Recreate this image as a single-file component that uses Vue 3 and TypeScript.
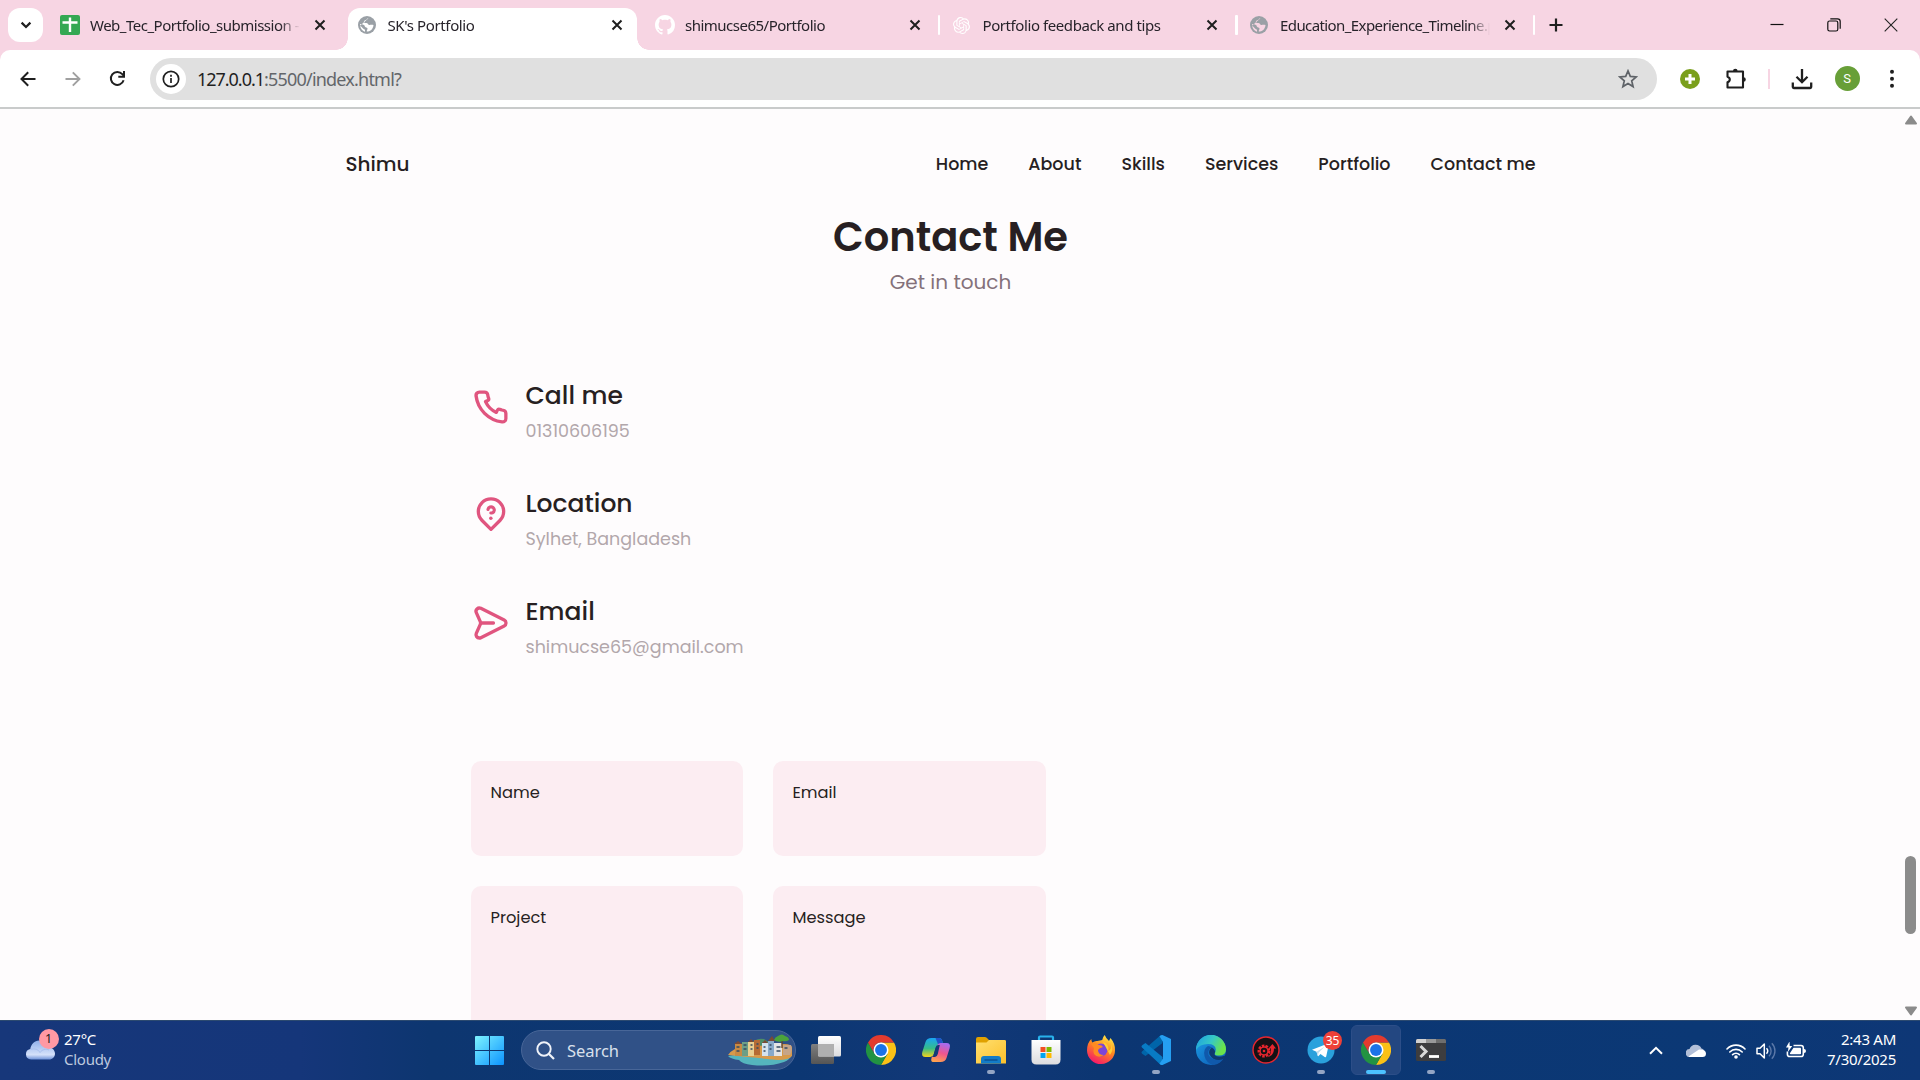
<script setup lang="ts">
import { ref } from 'vue'

interface Tab { title: string; icon: string; active?: boolean; divider?: boolean; width: number }
interface Info { icon: string; title: string; value: string }

const tabs = ref<Tab[]>([
  { title: 'Web_Tec_Portfolio_submission -', icon: 'sheets', width: 209 },
  { title: "SK's Portfolio", icon: 'globe', active: true, width: 87 },
  { title: 'shimucse65/Portfolio', icon: 'github', divider: true, width: 140 },
  { title: 'Portfolio feedback and tips', icon: 'gpt', divider: true, width: 178 },
  { title: 'Education_Experience_Timeline.p', icon: 'globe', divider: true, width: 216 },
])

const nav = ['Home', 'About', 'Skills', 'Services', 'Portfolio', 'Contact me']

const infos: Info[] = [
  { icon: 'phone', title: 'Call me', value: '01310606195' },
  { icon: 'pin', title: 'Location', value: 'Sylhet, Bangladesh' },
  { icon: 'send', title: 'Email', value: 'shimucse65@gmail.com' },
]

const fields = [
  { label: 'Name' }, { label: 'Email' },
  { label: 'Project', tall: true }, { label: 'Message', tall: true },
]

const apps = [
  { name: 'taskview' }, { name: 'chrome' }, { name: 'copilot' },
  { name: 'explorer', open: true }, { name: 'store' }, { name: 'firefox' },
  { name: 'code', open: true }, { name: 'edge' }, { name: 'red' },
  { name: 'telegram', open: true, badge: '35' },
  { name: 'chrome', current: true }, { name: 'terminal', open: true },
]

// Spreads a label over a given width by adjusting its letter spacing.
const vFit = {
  mounted(el: HTMLElement, binding: { value: number }) {
    const n = (el.textContent || '').length
    const w = el.getBoundingClientRect().width
    if (n > 0 && w > 0) el.style.letterSpacing = `${(binding.value - w) / n}px`
  },
}
</script>

<template>
  <div class="screen">
    <svg class="defs" width="0" height="0" aria-hidden="true">
      <defs>
        <linearGradient id="gWin" x1="0" y1="0" x2="1" y2="1"><stop offset="0" stop-color="#7df3ff" /><stop offset="1" stop-color="#0c93ff" /></linearGradient>
        <linearGradient id="gFolder" x1="0" y1="0" x2="1" y2="1"><stop offset="0" stop-color="#ffdf70" /><stop offset="1" stop-color="#fcc12b" /></linearGradient>
        <linearGradient id="gCloud" x1="0" y1="0" x2="0" y2="1"><stop offset="0" stop-color="#8fb0ea" /><stop offset=".75" stop-color="#d5e1fa" /><stop offset="1" stop-color="#6e92d8" /></linearGradient>
        <linearGradient id="gFox" x1=".8" y1="0" x2=".3" y2="1"><stop offset="0" stop-color="#fff04a" /><stop offset=".45" stop-color="#ff8a1e" /><stop offset="1" stop-color="#f5156c" /></linearGradient>
        <linearGradient id="gEdge" x1="0" y1="0" x2="1" y2=".4"><stop offset="0" stop-color="#1c9ee4" /><stop offset=".55" stop-color="#36c8c5" /><stop offset="1" stop-color="#6be34a" /></linearGradient>
        <linearGradient id="gEdge2" x1="0" y1="0" x2="1" y2="1"><stop offset="0" stop-color="#1ba0e8" /><stop offset="1" stop-color="#0c55b0" /></linearGradient>
        <linearGradient id="gCopA" x1="0" y1="0" x2="0" y2="1"><stop offset="0" stop-color="#19a5f5" /><stop offset=".55" stop-color="#36bd88" /><stop offset="1" stop-color="#f5d51a" /></linearGradient>
        <linearGradient id="gCopB" x1=".6" y1="0" x2=".3" y2="1"><stop offset="0" stop-color="#a66cf0" /><stop offset=".5" stop-color="#f0558e" /><stop offset="1" stop-color="#ffa34d" /></linearGradient>
        <linearGradient id="gPaper" x1="0" y1="0" x2="0" y2="1"><stop offset="0" stop-color="#ffffff" /><stop offset="1" stop-color="#dcdcde" /></linearGradient>
        <linearGradient id="gGrey" x1="0" y1="0" x2="0" y2="1"><stop offset="0" stop-color="#7f7f7f" /><stop offset="1" stop-color="#555555" /></linearGradient>
      </defs>
    </svg>

    <header class="tabstrip">
      <button class="tab-search"><svg width="12" height="12" viewBox="0 0 12 12"><path d="M1.600 3.600 6 8l4.400-4.400" fill="none" stroke="#1f1f1f" stroke-width="2.200" /></svg></button>
      <div class="tabs">
        <div v-for="(t, i) in tabs" :key="i" class="tab" :class="{ active: t.active }">
          <span class="fav">
            <svg v-if="t.icon === 'sheets'" width="20" height="20" viewBox="0 0 20 20"><rect width="20" height="20" rx="2" fill="#34a853" /><path d="M10 2.500v14.500M2.500 7.500h15" stroke="#fff" stroke-width="2.400" /></svg>
            <svg v-else-if="t.icon === 'globe'" width="18" height="18" viewBox="0 0 18 18"><circle cx="9" cy="9" r="9" fill="#9aa0a6" /><path d="M10.500 2.200c-1.800 0-1.500 1.500-2.700 1.900-1.100.4-2 .9-1.900 2 .1 1 1.400.9 2.500.9 1.500 0 1.400 1.700 2.700 1.900 1.300.1 2.600-.5 4.400.1-.1 1.900-1 4-2.600 5.200-1 .7-2.400 1.300-4.100 1.400-.2-1.300.8-1.900.7-3-.1-.9-1-1-1.900-1.300-1-.4-.7-1.500-1.600-2.200C4.700 8.300 3.500 8 2.100 7.900 1.900 11.500 3.700 14.600 7 15.700v-2C5 13.200 4.200 11 2 9.800Z" :fill="t.active ? '#ffffff' : '#f7d5e3'" /></svg>
            <svg v-else-if="t.icon === 'github'" width="20" height="20" viewBox="0 0 16 16"><path fill="#fff" d="M8 0C3.580 0 0 3.580 0 8c0 3.540 2.290 6.530 5.470 7.590.4.070.55-.17.55-.38 0-.19-.01-.82-.01-1.490-2.010.37-2.530-.49-2.690-.94-.09-.23-.48-.94-.82-1.130-.28-.15-.68-.52-.01-.53.63-.01 1.080.58 1.230.82.72 1.210 1.870.87 2.330.66.070-.52.28-.87.51-1.070-1.780-.2-3.640-.89-3.640-3.950 0-.87.31-1.590.82-2.150-.08-.2-.36-1.020.08-2.120 0 0 .67-.21 2.200.82.64-.18 1.320-.27 2-.27s1.360.09 2 .27c1.530-1.040 2.200-.82 2.200-.82.44 1.100.16 1.920.08 2.120.51.56.82 1.270.82 2.150 0 3.070-1.870 3.750-3.650 3.950.29.25.54.73.54 1.480 0 1.070-.01 1.930-.01 2.200 0 .21.15.46.55.38A8.010 8.010 0 0 0 16 8c0-4.420-3.580-8-8-8Z" /></svg>
            <svg v-else width="17" height="17" viewBox="0 0 24 24"><path fill="#fff" d="M22.282 9.821a5.985 5.985 0 0 0-.516-4.911 6.046 6.046 0 0 0-6.510-2.900A6.065 6.065 0 0 0 4.981 4.182a5.985 5.985 0 0 0-3.998 2.900 6.046 6.046 0 0 0 .743 7.097 5.980 5.980 0 0 0 .511 4.911 6.051 6.051 0 0 0 6.515 2.900A5.985 5.985 0 0 0 13.260 24a6.056 6.056 0 0 0 5.772-4.206 5.990 5.990 0 0 0 3.998-2.900 6.056 6.056 0 0 0-.747-7.073zM13.260 22.430a4.476 4.476 0 0 1-2.876-1.041l.141-.081 4.779-2.758a.795.795 0 0 0 .393-.681v-6.737l2.020 1.169a.071.071 0 0 1 .038.052v5.583a4.504 4.504 0 0 1-4.495 4.494zM3.600 18.304a4.471 4.471 0 0 1-.535-3.014l.142.085 4.783 2.759a.771.771 0 0 0 .781 0l5.843-3.369v2.332a.080.080 0 0 1-.033.062L9.740 19.950a4.500 4.500 0 0 1-6.140-1.646zM2.341 7.896a4.485 4.485 0 0 1 2.366-1.973V11.600a.766.766 0 0 0 .388.677l5.815 3.355-2.021 1.168a.076.076 0 0 1-.071 0l-4.830-2.787A4.504 4.504 0 0 1 2.341 7.872zm16.597 3.855l-5.833-3.387L15.119 7.200a.076.076 0 0 1 .071 0l4.830 2.791a4.494 4.494 0 0 1-.677 8.105v-5.678a.790.790 0 0 0-.405-.667zm2.011-3.023l-.142-.085-4.774-2.782a.776.776 0 0 0-.785 0L9.409 9.230V6.897a.066.066 0 0 1 .028-.061l4.830-2.787a4.499 4.499 0 0 1 6.682 4.660zM8.307 12.863l-2.020-1.164a.080.080 0 0 1-.038-.057V6.074a4.499 4.499 0 0 1 7.376-3.453l-.142.081L8.704 5.460a.795.795 0 0 0-.393.681zm1.097-2.366l2.602-1.500 2.607 1.500v2.999l-2.597 1.500-2.607-1.500Z" /></svg>
          </span>
          <span class="tab-title"><span v-fit="t.width" class="fit">{{ t.title }}</span></span>
          <svg class="tab-x" width="12" height="12" viewBox="0 0 12 12"><path d="M1.500 1.500l9 9m0-9l-9 9" stroke="#1f1f1f" stroke-width="2" /></svg>
          <i v-if="t.divider" class="divider"></i>
        </div>
      </div>
      <svg class="new-tab" width="14" height="14" viewBox="0 0 14 14"><path d="M7 .5v13M.5 7h13" stroke="#1f1f1f" stroke-width="2.200" /></svg>
      <div class="win-ctl">
        <svg width="14" height="14" viewBox="0 0 14 14"><path d="M.5 6.500h13" stroke="#111" stroke-width="1.200" /></svg>
        <svg width="14" height="14" viewBox="0 0 14 14"><g fill="none" stroke="#111" stroke-width="1.200"><rect x=".8" y="3" width="10" height="10" rx="1.800" /><path d="M3.300 .8h7.200a2.700 2.700 0 0 1 2.700 2.700v7.200" /></g></svg>
        <svg width="14" height="14" viewBox="0 0 14 14"><path d="M.7.7l12.600 12.600m0-12.600L.7 13.300" stroke="#222" stroke-width="1.100" /></svg>
      </div>
    </header>

    <div class="toolbar-wrap">
      <div class="toolbar">
        <svg class="tb back" width="16" height="16" viewBox="0 0 16 16"><path d="M15.500 8H1.700M8.200 1.300 1.500 8l6.700 6.700" fill="none" stroke="#1f1f1f" stroke-width="2" /></svg>
        <svg class="tb fwd" width="16" height="16" viewBox="0 0 16 16"><path d="M.5 8h13.800M7.800 1.300 14.500 8l-6.700 6.700" fill="none" stroke="#a0a0a0" stroke-width="1.900" /></svg>
        <svg class="tb reload" width="17" height="17" viewBox="0 0 17 17"><path d="M14.600 10.300A6.500 6.500 0 1 1 13.300 4.200L15 6" fill="none" stroke="#1f1f1f" stroke-width="2" /><path d="M15 1v5.800H9.300" fill="none" stroke="#1f1f1f" stroke-width="2" /></svg>
        <div class="omnibox">
          <span class="site-info"><svg width="18" height="18" viewBox="0 0 18 18"><circle cx="9" cy="9" r="7.700" fill="none" stroke="#1f1f1f" stroke-width="1.700" /><path d="M9 8v5M9 4.800v1.900" stroke="#1f1f1f" stroke-width="1.700" /></svg></span>
          <span class="url"><span v-fit="67" class="fit host">127.0.0.1</span><span v-fit="137" class="fit">:5500/index.html?</span></span>
          <svg class="star" width="20" height="20" viewBox="0 0 20 20"><path d="M10 1.900l2.300 5.500 5.900.5-4.500 3.900 1.400 5.800L10 14.500l-5.100 3.100 1.400-5.800L1.800 7.900l5.900-.5Z" fill="none" stroke="#5f6368" stroke-width="1.700" /></svg>
        </div>
        <div class="actions">
          <svg width="20" height="20" viewBox="0 0 20 20"><circle cx="10" cy="10" r="10" fill="#7a9f1c" /><path d="M10 5v10M5 10h10" stroke="#fff" stroke-width="3" /></svg>
          <svg width="22" height="22" viewBox="0 0 22 22"><path d="M2.500 3.500h15.500v16h-15.500v-5.200q2.300-.8 2.300-2.800t-2.300-2.800Z" fill="none" stroke="#1f1f1f" stroke-width="2.100" stroke-linejoin="round" /><path d="M8 3a2.300 2.300 0 0 1 4.600 0ZM18.500 9.200a2.300 2.300 0 0 1 0 4.600Z" fill="#1f1f1f" /></svg>
          <i class="pink-line"></i>
          <svg width="22" height="22" viewBox="0 0 22 22"><path d="M11 1v13M5.500 8.700 11 14.200l5.500-5.500M1.800 14.500v4.500q0 1 1 1h16.400q1 0 1-1v-4.500" fill="none" stroke="#1f1f1f" stroke-width="2.300" /></svg>
          <span class="avatar">S</span>
          <svg width="6" height="20" viewBox="0 0 6 20"><g fill="#1f1f1f"><circle cx="3" cy="2.800" r="2" /><circle cx="3" cy="9.800" r="2" /><circle cx="3" cy="16.800" r="2" /></g></svg>
        </div>
      </div>
    </div>

    <main class="viewport">
      <div class="page">
        <nav class="site-nav">
          <span class="brand">Shimu</span>
          <div class="links"><a v-for="n in nav" :key="n">{{ n }}</a></div>
        </nav>
        <div class="heading">
          <h1>Contact Me</h1>
          <p>Get in touch</p>
        </div>
        <div class="infos">
          <div v-for="c in infos" :key="c.icon" class="info">
            <svg width="40" height="40" viewBox="0 0 24 24" fill="#e0557f">
              <path v-if="c.icon === 'phone'" d="M19.440,13c-.22,0-.45-.07-.67-.12a9.440,9.440,0,0,1-1.310-.39,2,2,0,0,0-2.480,1l-.22.45a12.180,12.180,0,0,1-2.660-2,12.180,12.180,0,0,1-2-2.660L10.520,9a2,2,0,0,0,1-2.480,10.330,10.330,0,0,1-.39-1.310c-.05-.22-.09-.45-.12-.68a3,3,0,0,0-3-2.490h-3a3,3,0,0,0-3,3.410A19,19,0,0,0,18.530,21.910l.38,0a3,3,0,0,0,2-.76,3,3,0,0,0,1-2.250v-3A3,3,0,0,0,19.440,13Zm.5,6a1,1,0,0,1-.34.75,1.050,1.050,0,0,1-.82.25A17,17,0,0,1,4.070,5.220a1.090,1.090,0,0,1,.25-.82,1,1,0,0,1,.75-.34h3a1,1,0,0,1,1,.79q.06.41.15.81a11.120,11.120,0,0,0,.46,1.550l-1.400.65a1,1,0,0,0-.49,1.330,14.490,14.490,0,0,0,7,7,1,1,0,0,0,.76,0,1,1,0,0,0,.57-.52l.62-1.400a13.690,13.690,0,0,0,1.580.46q.4.09.81.15a1,1,0,0,1,.79,1Z" />
              <g v-else-if="c.icon === 'pin'"><path d="M12 20.600 6.650 15.300a7.600 7.600 0 1 1 10.700 0Z" fill="none" stroke="#e0557f" stroke-width="2" stroke-linejoin="round" /><path d="M10.200 8.600a1.900 1.900 0 1 1 2.700 2.100 3 3 0 0 1-1 .1" fill="none" stroke="#e0557f" stroke-width="1.900" stroke-linecap="round" /><circle cx="11.900" cy="14" r="1.050" /></g>
              <path v-else d="M20.340,9.320l-14-7a3,3,0,0,0-4.080,3.900l2.400,5.370h0a1.060,1.060,0,0,1,0,.82l-2.400,5.370A3,3,0,0,0,5,22a3.140,3.140,0,0,0,1.350-.32l14-7a3,3,0,0,0,0-5.360Zm-.89,3.570-14,7a1,1,0,0,1-1.350-1.300l2.390-5.370A2,2,0,0,0,6.570,13h6.890a1,1,0,0,0,0-2H6.570a2,2,0,0,0-.08-.22L4.100,5.410a1,1,0,0,1,1.350-1.300l14,7a1,1,0,0,1,0,1.780Z" />
            </svg>
            <div class="info-text">
              <h3>{{ c.title }}</h3>
              <p>{{ c.value }}</p>
            </div>
          </div>
        </div>
        <form class="form">
          <div v-for="f in fields" :key="f.label" class="field" :class="{ tall: f.tall }"><label>{{ f.label }}</label></div>
        </form>
      </div>
      <div class="scrollbar">
        <svg width="14" height="10" viewBox="0 0 14 10"><path d="M7 1.500 12 8.500H2Z" fill="#8b8b8b" stroke="#8b8b8b" stroke-width="2" stroke-linejoin="round" /></svg>
        <div class="thumb"></div>
        <svg class="down" width="14" height="10" viewBox="0 0 14 10"><path d="M7 8.500 12 1.500H2Z" fill="#8b8b8b" stroke="#8b8b8b" stroke-width="2" stroke-linejoin="round" /></svg>
      </div>
    </main>

    <footer class="taskbar">
      <div class="weather">
        <div class="cloud">
          <svg width="31" height="22" viewBox="0 0 31 22"><path d="M6 20.500a5.300 5.300 0 0 1-.7-10.500C6 5.200 9.500 1.500 14 1.500c4 0 7 2.500 8 6.200 4.500 0 8 3 8 6.800 0 3.500-2.500 6-6 6Z" fill="url(#gCloud)" /><path d="M5.500 10.500c4-1.500 8 0 9.500 3 2-3 6-4 9-2.500" fill="none" stroke="#a9c0ef" stroke-width="1" /></svg>
          <b>1</b>
        </div>
        <div class="weather-text"><span v-fit="32" class="fit">27°C</span><span v-fit="47" class="fit dim">Cloudy</span></div>
      </div>
      <div class="dock">
        <svg class="start" width="29" height="29" viewBox="0 0 29 29"><path fill="url(#gWin)" d="M1 0h13v14H0V1a1 1 0 0 1 1-1ZM15 0h13a1 1 0 0 1 1 1v13H15ZM0 15h14v14H1a1 1 0 0 1-1-1ZM15 15h14v13a1 1 0 0 1-1 1H15Z" /></svg>
        <div class="search">
          <svg width="19" height="19" viewBox="0 0 19 19"><circle cx="8" cy="8" r="6.700" fill="none" stroke="#f0f3f9" stroke-width="1.900" /><path d="m13 13 5 5" stroke="#f0f3f9" stroke-width="2.200" /></svg>
          <span v-fit="52" class="fit">Search</span>
          <svg class="island" width="64" height="32" viewBox="0 0 64 32">
            <path d="M20 12q8-9 16-7l8 5v10H20Z" fill="#4d8d68" />
            <path d="M0 22q20-4 40-3 15 0 24 1-2 6-8 8-14 5-32 3-10-1-13-5-8-1-11-4Z" fill="#55b5bd" />
            <path d="M0 21q6-8 16-8l40-3q8 0 8 4v8q-3 4-14 4-30-3-50-5Z" fill="#d79a4b" />
            <path d="M7 10h7v12H7Z" fill="#c98a43" /><path d="M14 8h6v14h-6Z" fill="#6c9e86" /><path d="M20 8h6v14h-6Z" fill="#e8cf91" /><path d="M26 6h6v15h-6Z" fill="#b56b34" />
            <path d="M34 9h6v13h-6Z" fill="#d4e2ee" /><path d="M40 7h6v15h-6Z" fill="#87a9ca" /><path d="M46 9h8v13h-8Z" fill="#e3e4e5" /><path d="M55 11h8q2 5-1 10h-7Z" fill="#c6a588" />
            <path d="m6 10 4-3 4 3ZM20 8l3-3 3 3ZM40 7l4-5 3 5ZM34 9l3-3 3 3Z" fill="#7c4a35" />
            <path d="M8.500 13h3m-3 4h3m4-6h3m-3 4h3m4-4h2m-2 4h2m4-5h2m-2 4h2m5-1h2m-2 4h2m4-6h2m-2 4h2m5-2h4m-4 4h4m4-3h3" stroke="#344a61" stroke-width="1.300" />
            <path d="M54 5v9" stroke="#65452a" stroke-width="1.400" /><path d="M46 6q1-3 4-4 4-3 7 0 4 1 4 4-3 2-6 1-5 2-9-1Z" fill="#4ba33b" />
          </svg>
        </div>
        <div v-for="(a, i) in apps" :key="i" class="app" :class="{ current: a.current, open: a.open }">
          <svg v-if="a.name === 'taskview'" width="30" height="30" viewBox="0 0 30 30"><rect x="0" y="9" width="23" height="20" rx="1.500" fill="url(#gGrey)" /><rect x="7" y="1" width="23" height="20.500" rx="1.500" fill="url(#gPaper)" /><path d="M7 9h16v12.500H8.500A1.500 1.500 0 0 1 7 20Z" fill="#b0b0b0" /></svg>
          <svg v-else-if="a.name === 'chrome'" width="30" height="30" viewBox="0 0 48 48"><path d="M24 12H44.800A24 24 0 0 1 24 48L34.400 30Z" fill="#fbc116" /><path d="M34.400 30 24 48A24 24 0 0 1 3.200 12L13.600 30Z" fill="#229342" /><path d="M3.200 12A24 24 0 0 1 44.800 12H24A12 12 0 0 0 13.600 30Z" fill="#e33b2e" /><path d="M24 12 34.400 30 13.600 30Z" fill="#fff" /><circle cx="24" cy="24" r="12" fill="#fff" /><circle cx="24" cy="24" r="9.500" fill="#1a73e8" /></svg>
          <svg v-else-if="a.name === 'copilot'" width="30" height="30" viewBox="0 0 30 30"><path d="M10.500 3H18q2.500 0 3.300 3l1 4h-4.500q-2.500 0-3.300 3l-1.700 6q-1 3-4 3H4.500Q0 22 1.300 17L4.500 7q1.200-4 6-4Z" fill="url(#gCopA)" /><path d="M14.500 3H18q2.500 0 3.300 3l1 4h-5Z" fill="#2152c9" /><path d="M19.500 27H12q-2.500 0-1.500-4l.7-2q2-.5 2.800-3l2-7q1-3 4-3h5.500q4.500 0 3.200 5l-3.200 10q-1.200 4-6 4Z" fill="url(#gCopB)" /><path d="m15 12-2.500 8q-.7 2-2.500 2h4q2 0 2.800-3l2-9h-1.300q-2 0-2.500 2Z" fill="#123a78" /></svg>
          <svg v-else-if="a.name === 'explorer'" width="30" height="30" viewBox="0 0 30 30"><path d="M0 4q0-2 2-2h7q1.500 0 2.500 1.500L13 5h15.500Q30 5 30 6.500V12H0Z" fill="#e0a100" /><path d="M0 7.500h10.500L13 5h15.500Q30 5 30 6.500V28.500H0Z" fill="url(#gFolder)" /><path d="M5 28.500V24q0-3 3-3h14q3 0 3 3v4.500Z" fill="#137cc7" /><path d="M8.500 25h13" stroke="#0c4f91" stroke-width="1.400" /></svg>
          <svg v-else-if="a.name === 'store'" width="30" height="30" viewBox="0 0 30 30"><path d="M8 7V2.500Q8 1.500 9 1.500h12q1 0 1 1V7" fill="none" stroke="#28b1ec" stroke-width="2.200" /><path d="M.5 5h29v19.500q0 5-5 5h-19q-5 0-5-5Z" fill="url(#gPaper)" /><path d="M9.500 12h5v5h-5Z" fill="#f25022" /><path d="M15.500 12h5v5h-5Z" fill="#7fba00" /><path d="M9.500 18h5v5h-5Z" fill="#00a4ef" /><path d="M15.500 18h5v5h-5Z" fill="#ffb900" /></svg>
          <svg v-else-if="a.name === 'firefox'" width="30" height="30" viewBox="0 0 30 30"><path d="M18.700 0q1.300 3.300 4.300 6l1.500-3q4.700 5.500 4.500 12a14 13.800 0 1 1-28 .5Q1 8 5.300 4q.2 2.700 1 3.500Q9 5.600 11.200 6q3-.5 5-1 .5-3 2.500-5Z" fill="url(#gFox)" /><circle cx="15" cy="15" r="6.500" fill="#7b45d8" /><path d="M5 9q4-2 8 1 3 0 4 2-4 1-5 3 0 5 6 5-6 4-10-1-1-4 0-6Z" fill="#ff8a22" /><path d="M17 7q6 2 5.500 9 4-3 2.500-8 3 7-1 12" fill="#ffce35" /></svg>
          <svg v-else-if="a.name === 'code'" width="30" height="30" viewBox="0 0 30 30"><path d="M21.500 8 4.500 21 1.500 19q-2-1.300 0-3L19 .8q1.300-1.200 2.500 0Z" fill="#0065a9" /><path d="M21.500 22 4.500 8 1.500 10q-2 1.300 0 3L19 29.200q1.300 1.200 2.500 0Z" fill="#087bc4" /><path d="M21.500 0 30 4v22l-8.500 4q-1.700.3-3-1.200l3.500-5.300V7l-3.500-5.800Q20 0 21.500 0Z" fill="#259ff1" /></svg>
          <svg v-else-if="a.name === 'edge'" width="30" height="30" viewBox="0 0 30 30"><circle cx="15" cy="15" r="15" fill="url(#gEdge2)" /><path d="M0 15A15 15 0 0 1 30 14.500q0 6-7 6-4.500 0-4.500-2 1.300-1.500 1.300-4Q19.500 9 12 9 3.500 9 0 15Z" fill="url(#gEdge)" /><path d="M12 11Q7 14 8.500 21t9 9A15 15 0 0 0 28 23q-7 3.500-12 .5-5.500-3.500-3-8.500 1-2 3-2.500Q14 11 12 11Z" fill="#1059ab" /><path d="M16 12.500q-4 2.500-2.500 7 3 5.500 9.500 5.500 3-.3 5.800-1.800 1.200-2 .7-2.600-5 2-9.500.5-2-1-1.300-2.600 1.500-3-2.700-6Z" fill="#0e386f" /></svg>
          <svg v-else-if="a.name === 'red'" width="30" height="30" viewBox="0 0 30 30"><circle cx="15" cy="15" r="13" fill="#141115" stroke="#e7262e" stroke-width="1.400" /><circle cx="13" cy="16" r="5.300" fill="none" stroke="#e7262e" stroke-width="2.400" stroke-dasharray="2.500 1.200" /><circle cx="13" cy="16" r="4" fill="none" stroke="#e7262e" stroke-width="1.500" /><circle cx="13" cy="16" r="1.300" fill="#e7262e" /><path d="M15 22.500q5.500-1.500 5-9h-2.500l4-4.500 3.500 4.500h-2q0 8-8 9Z" fill="#e7262e" /></svg>
          <svg v-else-if="a.name === 'telegram'" width="30" height="30" viewBox="0 0 30 30"><circle cx="15" cy="15" r="13.500" fill="#2aa1dc" /><path d="m6 14.800 16-6.300q1-.3.800 1l-2.600 12q-.4 1.200-1.500.5L14.500 19l-2 2q-.6.500-.8-.3l-1.200-4Z" fill="#fff" /><path d="m10.500 16.700 8-5-6 6-.5 3.500Z" fill="#bddced" /></svg>
          <svg v-else width="30" height="30" viewBox="0 0 30 30"><rect y="4" width="30" height="22" rx="1.500" fill="#3d3d3f" /><path d="M0 8V5.500Q0 4 1.500 4H10v4Z" fill="#d1d1d1" /><path d="M10 4h10v4H10Z" fill="#999" /><path d="M20 4h8.500Q30 4 30 5.500V8H20Z" fill="#6e6e6e" /><path d="m4.500 11 5.500 5.500L4.500 22" fill="none" stroke="#d8d8d8" stroke-width="3" /><path d="M13 21.500h10" stroke="#fff" stroke-width="2.800" /></svg>
          <em v-if="a.badge">{{ a.badge }}</em>
        </div>
      </div>
      <div class="tray">
        <svg class="chev" width="14" height="9" viewBox="0 0 14 9"><path d="M1 7.800 7 1.800l6 6" fill="none" stroke="#fff" stroke-width="2" /></svg>
        <svg class="onedrive" width="20" height="13" viewBox="0 0 20 13"><path d="M4 13a4 4 0 0 1-.5-8A6.500 6.500 0 0 1 15.500 4.500 4.500 4.500 0 0 1 16 13Z" fill="#b2bfd8" /><path d="M2.500 12.500 13 5.500q7 0 7 4 0 3.500-3.500 3.500H4q-1 0-1.500-.5Z" fill="#fff" /></svg>
        <svg class="wifi" width="20" height="16" viewBox="0 0 20 16"><g fill="none" stroke="#fff" stroke-width="1.600" stroke-linecap="round"><path d="M1 6a12.500 12.500 0 0 1 18 0M3.800 9a8.700 8.700 0 0 1 12.400 0M6.600 11.700a4.900 4.900 0 0 1 6.800 0" /></g><circle cx="10" cy="14" r="1.800" fill="#fff" /></svg>
        <svg class="vol" width="20" height="18" viewBox="0 0 20 18"><path d="M1 6.300h3L8.300 2v14L4 11.700H1Z" fill="none" stroke="#fff" stroke-width="1.500" stroke-linejoin="round" /><path d="M10.500 6.300a4 4 0 0 1 0 5.400" fill="none" stroke="#fff" stroke-width="1.500" /><path d="M13 3.800a7.500 7.500 0 0 1 0 10.400M15.800 1.300a11 11 0 0 1 0 15.400" fill="none" stroke="#5b78a8" stroke-width="1.400" /></svg>
        <svg class="bat" width="20" height="18" viewBox="0 0 20 18"><path d="M7.500 3.500h7.500q2.300 0 2.300 2.300v6.400q0 2.300-2.300 2.300H3.700q-2.300 0-2.300-2.300V9.500" fill="none" stroke="#fff" stroke-width="1.600" /><path d="M7.500 5.800h6.700q.8 0 .8.800v4.800q0 .8-.8.800H4.700q-1 0-.8-1Z" fill="#fff" /><path d="M18 7q2 0 2 2t-2 2ZM3.500-.5 0 5.500h2.500L1.800 10 6.300 4H3.700Z" fill="#fff" /></svg>
        <div class="clock"><span v-fit="55" class="fit">2:43 AM</span><span v-fit="69" class="fit">7/30/2025</span></div>
      </div>
    </footer>
  </div>
</template>

<style>
body { margin: 0; overflow: hidden; }
</style>

<style scoped>
* { box-sizing: border-box; }
.screen { width: 1920px; height: 1080px; display: flex; flex-direction: column; overflow: hidden; background: #fefcfd; font-family: "Segoe UI", Selawik, "Noto Sans", "Open Sans", sans-serif; color: #1f1f1f; }
.defs { display: block; width: 0; height: 0; flex: none; }
svg { display: block; flex: none; }
.fit { display: inline-block; white-space: nowrap; }

.tabstrip { height: 50px; flex: none; display: flex; align-items: center; background: #f7d5e3; }
.tab-search { width: 35px; height: 34px; margin-left: 8px; padding: 0; border: 0; border-radius: 12px; background: #fff; display: flex; align-items: center; justify-content: center; flex: none; }
.tabs { display: flex; margin-left: 7px; align-self: stretch; align-items: flex-end; }
.tab { width: 297.500px; height: 42px; padding-left: 10px; padding-bottom: 8px; display: flex; align-items: center; position: relative; flex: none; }
.tab.active { width: 289.500px; margin-right: 8px; border-radius: 12px 12px 0 0; background: #fff; }
.tab.active::before, .tab.active::after { content: ""; position: absolute; bottom: 0; width: 12px; height: 12px; }
.tab.active::before { left: -12px; background: radial-gradient(circle at 0 0, transparent 11.500px, #fff 12px); }
.tab.active::after { right: -12px; background: radial-gradient(circle at 100% 0, transparent 11.500px, #fff 12px); }
.fav { width: 20px; height: 20px; display: flex; align-items: center; justify-content: flex-start; }
.tab-title { width: 210px; margin-left: 10px; overflow: hidden; white-space: nowrap; font-size: 15px; line-height: 22px; color: #27232a; mask-image: linear-gradient(90deg, #000 190px, transparent 210px); }
.tab-x { margin-left: 13.500px; }
.divider { width: 2.500px; height: 20px; margin-left: 17px; border-radius: 1px; background: #fff; flex: none; }
.new-tab { margin-left: 11.500px; }
.win-ctl { margin-left: auto; margin-right: 22px; display: flex; gap: 43px; }

.toolbar-wrap { height: 59px; flex: none; background: #f7d5e3; }
.toolbar { height: 59px; display: flex; align-items: center; padding-left: 19.500px; border-radius: 10px 10px 0 0; border-bottom: 2px solid #c9cbcb; background: #fff; }
.fwd { margin-left: 29px; }
.reload { margin-left: 28.500px; }
.omnibox { width: 1507px; height: 42px; margin-left: 24px; margin-top: 1px; padding: 0 19px 0 6px; border-radius: 21px; background: #e0e0e0; display: flex; align-items: center; flex: none; }
.site-info { width: 30px; height: 30px; border-radius: 50%; background: #fff; display: flex; align-items: center; justify-content: center; }
.url { margin-left: 11px; font-size: 18px; line-height: 24px; color: #63666a; display: flex; }
.host { color: #1f1f1f; }
.star { margin-left: auto; }
.actions { display: flex; align-items: center; margin-left: 22.500px; }
.actions svg:nth-child(2) { margin-left: 25px; }
.pink-line { width: 2px; height: 20px; margin-left: 21px; background: #f7d5e3; }
.actions svg:nth-child(4) { margin-left: 21px; }
.avatar { width: 25px; height: 25px; margin-left: 22px; border-radius: 50%; background: #689f38; color: #fff; font: 13px/25px Roboto, sans-serif; text-align: center; }
.actions svg:last-child { margin-left: 29.500px; }

.viewport { height: 911px; flex: none; display: flex; overflow: hidden; font-family: Poppins, Inter, sans-serif; color: #271f22; }
.page { width: 1900px; height: 911px; overflow: hidden; }
.site-nav { width: 1190px; height: 109px; margin-left: 345.500px; display: flex; align-items: center; justify-content: space-between; font-weight: 500; font-size: 17.500px; line-height: 24px; }
.brand { font-size: 20px; padding-top: 1px; }
.links { display: flex; gap: 40px; }
.heading { text-align: center; padding-left: 1px; }
.heading h1 { margin: 0; font-size: 40px; line-height: 38px; font-weight: 600; }
.heading p { margin: 12px 0 0; font-size: 20px; line-height: 28px; color: #84717a; }
.infos { margin: 85px 0 0 470.500px; display: flex; flex-direction: column; gap: 44px; }
.info { height: 64px; display: flex; gap: 15px; }
.info svg { margin-top: 6px; }
.info h3 { margin: 0; padding-top: 1px; font-size: 25px; line-height: 28px; font-weight: 500; }
.info p { margin: 7px 0 0; font-size: 17.500px; line-height: 28px; color: #b2a7ab; }
.form { margin: 100px 0 0 471px; display: grid; grid-template-columns: 272px 273px; column-gap: 30px; row-gap: 30px; }
.field { height: 95px; padding: 20px 19.500px; border-radius: 10px; background: #fcedf2; font-size: 16.260px; line-height: 24px; }
.field.tall { height: 220px; }
.scrollbar { width: 20px; height: 911px; display: flex; flex-direction: column; align-items: center; padding-left: 1px; padding-top: 6px; }
.thumb { width: 11px; height: 78px; margin-top: 731px; border-radius: 6px; background: #8b8b8b; flex: none; }
.down { margin-top: 72px; }

.taskbar { height: 60px; flex: none; display: flex; align-items: center; border-top: 1px solid #2c4a70; background: linear-gradient(90deg, #17377a 0, #15367a 300px, #0d3670 430px, #0c3773 800px, #123878 950px, #0c3672 1100px, #0b3875 1700px, #0e3776 1920px); color: #fff; font-size: 15px; }
.weather { width: 475px; padding-left: 25px; padding-bottom: 3px; display: flex; align-items: center; }
.cloud { position: relative; width: 31px; padding-top: 1px; }
.cloud b { position: absolute; left: 13.500px; top: -9px; width: 20px; height: 20px; border-radius: 50%; background: #ff99a4; color: #1c1c1c; font-weight: 400; font-size: 12.500px; line-height: 20px; text-align: center; }
.weather-text { margin-left: 8px; display: flex; flex-direction: column; align-items: flex-start; line-height: 20px; font-size: 15px; }
.dim { color: #bdc9df; }
.dock { display: flex; align-items: center; padding-bottom: 1px; }
.search { width: 275px; height: 40px; margin: 0 5px 0 17px; padding: 0 3px 0 14px; border: 1px solid #486698; border-radius: 20px; background: #305187; display: flex; align-items: center; color: #d9e0ec; font-size: 16.500px; }
.search .fit { margin-left: 12px; }
.island { margin-left: auto; }
.app { width: 50px; height: 50px; margin-right: 5px; border-radius: 6px; display: flex; align-items: center; justify-content: center; position: relative; border: 1px solid transparent; }
.app.current { background: #234781; border-color: #2c4e88; }
.app.open::after, .app.current::after { content: ""; position: absolute; bottom: 0; left: 20px; width: 8px; height: 4px; border-radius: 2px; background: #93a5c4; }
.app.current::after { left: 14px; width: 20px; background: #4cc2ff; }
.app em { position: absolute; left: 26px; top: 5px; width: 19px; height: 19px; border-radius: 50%; background: #ee4038; font-style: normal; font-size: 12px; line-height: 19px; text-align: center; }
.tray { margin-left: auto; margin-right: 24px; display: flex; align-items: center; }
.onedrive { margin-left: 23px; }
.wifi { margin-left: 20px; }
.vol, .bat { margin-left: 10px; }
.clock { width: 70px; margin-left: 20px; padding-bottom: 3px; display: flex; flex-direction: column; align-items: flex-end; line-height: 20px; font-size: 15px; }
</style>
